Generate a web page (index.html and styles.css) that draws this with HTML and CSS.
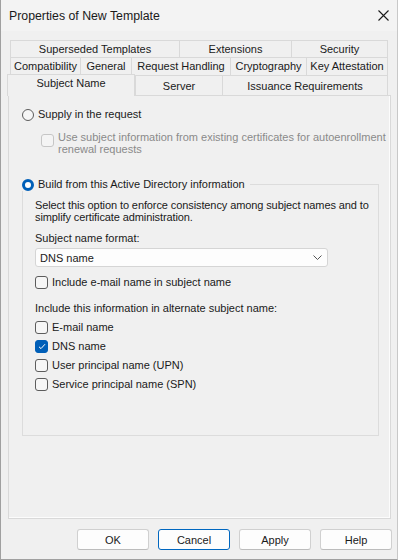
FILE: index.html
```html
<!doctype html>
<html>
  <head>
    <link rel="stylesheet" href="styles.css">
  </head>
  <body>
    <div class="window">
      <div class="titlebar">
        <span class="title">Properties of New Template</span>
        <svg class="close" width="11" height="11" viewBox="0 0 11 11">
          <path d="M0.5 0.5 L10.5 10.5 M10.5 0.5 L0.5 10.5" stroke="#1a1a1a" stroke-width="1.1" fill="none"/>
        </svg>
      </div>

      <div class="content">
        <div class="tabs">
          <div class="tab-row row-1">
            <div class="tab">Superseded Templates</div>
            <div class="tab">Extensions</div>
            <div class="tab">Security</div>
          </div>
          <div class="tab-row row-2">
            <div class="tab">Compatibility</div>
            <div class="tab">General</div>
            <div class="tab">Request Handling</div>
            <div class="tab">Cryptography</div>
            <div class="tab">Key Attestation</div>
          </div>
          <div class="tab-row row-3">
            <div class="tab selected">Subject Name</div>
            <div class="tab">Server</div>
            <div class="tab">Issuance Requirements</div>
          </div>
        </div>

        <div class="page">
          <label class="option">
            <span class="radio"></span>
            <span>Supply in the request</span>
          </label>
          <label class="option sub disabled">
            <span class="check"></span>
            <span>Use subject information from existing certificates for autoenrollment renewal requests</span>
          </label>

          <fieldset class="group">
            <legend class="option">
              <span class="radio on"></span>
              <span>Build from this Active Directory information</span>
            </legend>
            <p class="note">Select this option to enforce consistency among subject names and to simplify certificate administration.</p>
            <div class="field-label">Subject name format:</div>
            <div class="select">
              <span>DNS name</span>
              <svg width="9" height="5" viewBox="0 0 9 5">
                <path d="M0.5 0.5 L4.5 4.5 L8.5 0.5" stroke="#555" stroke-width="1" fill="none"/>
              </svg>
            </div>
            <label class="option email">
              <span class="check"></span>
              <span>Include e-mail name in subject name</span>
            </label>

            <div class="field-label alt">Include this information in alternate subject name:</div>
            <div class="check-list">
              <label class="option">
                <span class="check"></span>
                <span>E-mail name</span>
              </label>
              <label class="option">
                <span class="check on">
                  <svg width="8" height="7" viewBox="0 0 8 7"><path d="M1 3.8 L3 5.6 L7 1.2" stroke="#fff" stroke-width="1" fill="none"/></svg>
                </span>
                <span>DNS name</span>
              </label>
              <label class="option">
                <span class="check"></span>
                <span>User principal name (UPN)</span>
              </label>
              <label class="option">
                <span class="check"></span>
                <span>Service principal name (SPN)</span>
              </label>
            </div>
          </fieldset>
        </div>

        <div class="buttons">
          <button class="btn">OK</button>
          <button class="btn default">Cancel</button>
          <button class="btn">Apply</button>
          <button class="btn">Help</button>
        </div>
      </div>
    </div>
  </body>
</html>
```

FILE: styles.css
```css
html, body {
  margin: 0;
  padding: 0;
  background: #fff;
}

body {
  font-family: "Liberation Sans", Arial, sans-serif;
  font-size: 11px;
  color: #1a1a1a;
}

.window {
  width: 398px;
  height: 560px;
  box-sizing: border-box;
  border: 1px solid #a0a0a0;
  border-right-color: #c8c8c8;
  border-top: none;
  background: #f0f0f0;
  display: flex;
  flex-direction: column;
}

.titlebar {
  height: 31px;
  flex: none;
  background: #f3f3f3;
  display: flex;
  align-items: center;
  justify-content: space-between;
  padding: 0 8px 0 8px;
}

.title {
  font-size: 12.3px;
  margin-top: 1px;
}

/* tabs + page + buttons */
.content {
  flex: 1;
  display: flex;
  flex-direction: column;
  padding: 9px 6px 0 7px;
}

.tabs {
  display: flex;
  flex-direction: column;
  padding: 0 2px;
}

.tab-row {
  display: grid;
}

.row-1 { grid-template-columns: 169px 112px 97px; height: 17px; }
.row-2 { grid-template-columns: 70px 51px 99px 76px 82px; height: 18px; }
.row-3 { grid-template-columns: 125px 87px 166px; height: 20px; }

.tab {
  border: 1px solid #d9d9d9;
  border-right: none;
  border-bottom: none;
  background: #f0f0f0;
  text-align: center;
  line-height: 17px;
  white-space: nowrap;
  overflow: hidden;
}

.tab-row .tab:last-child {
  border-right: 1px solid #d9d9d9;
}

.row-3 .tab {
  line-height: 20px;
}

.tab.selected {
  position: relative;
  z-index: 1;
  margin: -1px 0 -1px -3px;
  background: #f0f0f0;
  border-right: 1px solid #d9d9d9;
  line-height: 17px;
}

.page {
  height: 424px;
  box-sizing: border-box;
  border: 1px solid #d9d9d9;
  background: #f0f0f0;
  box-shadow: inset -1px -1px 0 #fcfcfc;
  padding: 12px 11px 0 13px;
  display: flex;
  flex-direction: column;
}

/* controls */
.option {
  display: flex;
  align-items: center;
  gap: 4px;
  line-height: 13px;
}

.sub {
  align-items: flex-start;
  margin: 10px -8px 0 19px;
  line-height: 12px;
}

.sub .check {
  margin-top: 3px;
}

.disabled {
  color: #8a8a8a;
}

.radio {
  width: 12px;
  height: 12px;
  box-sizing: border-box;
  border: 1px solid #5c5c5c;
  border-radius: 50%;
  background: #f6f6f6;
  flex: none;
}

.radio.on {
  border: 3.5px solid #005fb8;
  background: #fff;
}

.check {
  width: 13px;
  height: 13px;
  box-sizing: border-box;
  border: 1px solid #5c5c5c;
  border-radius: 3px;
  background: #f6f6f6;
  flex: none;
  display: flex;
  align-items: center;
  justify-content: center;
}

.check.on {
  background: #005fb8;
  border-color: #005fb8;
}

.disabled .check {
  border-color: #c6c6c6;
  background: #f4f4f4;
}

.group {
  margin: 23px 0 0 0;
  border: 1px solid #dcdcdc;
  padding: 8px 3px 44px 12px;
  min-width: 0;
}

.group legend {
  margin-left: -13px;
  padding: 0 5px 0 0;
}

.note {
  margin: 0;
  line-height: 12px;
  letter-spacing: -0.1px;
}

.field-label {
  margin-top: 9px;
  line-height: 12px;
}

.field-label.alt {
  margin-top: 13px;
}

.select {
  margin: 4px 47px 0 0;
  height: 19px;
  box-sizing: border-box;
  border: 1px solid #d5d5d5;
  border-radius: 3px;
  background: #fdfdfd;
  display: flex;
  align-items: center;
  justify-content: space-between;
  padding: 0 5px 0 4px;
}

.email {
  margin-top: 9px;
}

.check-list {
  margin-top: 7px;
  display: flex;
  flex-direction: column;
  gap: 6px;
}

.buttons {
  margin: 10px -1px 0 0;
  display: flex;
  justify-content: flex-end;
  gap: 9px;
}

.btn {
  width: 72px;
  height: 21px;
  font: inherit;
  color: #1a1a1a;
  background: #fdfdfd;
  border: 1px solid #d0d0d0;
  border-bottom-color: #bcbcbc;
  border-radius: 3px;
  padding: 0;
}

.btn.default {
  border: 1px solid #0067c0;
}
```
